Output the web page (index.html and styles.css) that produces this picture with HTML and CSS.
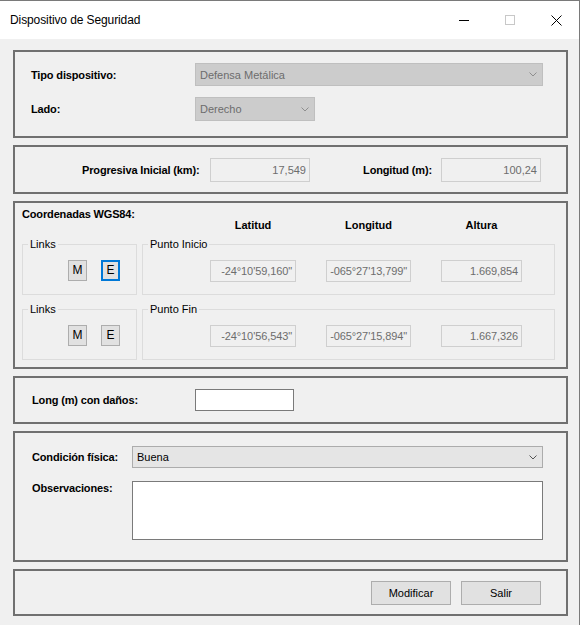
FILE: index.html
```html
<!DOCTYPE html>
<html lang="es">
<head>
<meta charset="utf-8">
<title>Dispositivo de Seguridad</title>
<link rel="stylesheet" href="styles.css">
</head>
<body>
<div class="window">
  <div class="titlebar">
    <span class="title">Dispositivo de Seguridad</span>
    <div class="controls">
      <span class="ctl"><svg width="10" height="10" viewBox="0 0 10 10"><path d="M0 5.5h10" stroke="#000" stroke-width="1"/></svg></span>
      <span class="ctl"><svg width="10" height="10" viewBox="0 0 10 10"><rect x="0.5" y="0.5" width="9" height="9" fill="none" stroke="#c8c8c8"/></svg></span>
      <span class="ctl"><svg width="11" height="11" viewBox="0 0 11 11"><path d="M0.5 0.5L10.5 10.5M10.5 0.5L0.5 10.5" stroke="#000" stroke-width="1"/></svg></span>
    </div>
  </div>

  <div class="content">
    <section class="panel p1">
      <div class="form-grid">
        <span class="lbl">Tipo dispositivo:</span>
        <div class="combo disabled wide"><span>Defensa Metálica</span><svg width="8" height="5" viewBox="0 0 8 5"><path d="M0.5 0.5L4 4L7.5 0.5" fill="none" stroke="#8e8e8e"/></svg></div>
        <span class="lbl">Lado:</span>
        <div class="combo disabled short"><span>Derecho</span><svg width="8" height="5" viewBox="0 0 8 5"><path d="M0.5 0.5L4 4L7.5 0.5" fill="none" stroke="#8e8e8e"/></svg></div>
      </div>
    </section>

    <section class="panel p2">
      <span class="lbl lbl-prog">Progresiva Inicial (km):</span>
      <div class="tb tb-wide">17,549</div>
      <span class="lbl lbl-long">Longitud (m):</span>
      <div class="tb tb-wide">100,24</div>
    </section>

    <section class="panel p3">
      <div class="coord-title">Coordenadas WGS84:</div>
      <div class="headers">
        <span>Latitud</span>
        <span>Longitud</span>
        <span>Altura</span>
      </div>
      <div class="grow first">
        <fieldset class="links">
          <legend>Links</legend>
          <div class="btns">
            <span class="mbtn">M</span>
            <span class="mbtn focus">E</span>
          </div>
        </fieldset>
        <fieldset class="punto">
          <legend>Punto Inicio</legend>
          <div class="coords">
            <div class="tb ctb">-24°10'59,160"</div>
            <div class="tb ctb">-065°27'13,799"</div>
            <div class="tb ctb">1.669,854</div>
          </div>
        </fieldset>
      </div>
      <div class="grow second">
        <fieldset class="links">
          <legend>Links</legend>
          <div class="btns">
            <span class="mbtn">M</span>
            <span class="mbtn">E</span>
          </div>
        </fieldset>
        <fieldset class="punto">
          <legend>Punto Fin</legend>
          <div class="coords">
            <div class="tb ctb">-24°10'56,543"</div>
            <div class="tb ctb">-065°27'15,894"</div>
            <div class="tb ctb">1.667,326</div>
          </div>
        </fieldset>
      </div>
    </section>

    <section class="panel p4">
      <span class="lbl lbl-danos">Long (m) con daños:</span>
      <div class="input"></div>
    </section>

    <section class="panel p5">
      <div class="form-grid2">
        <span class="lbl">Condición física:</span>
        <div class="combo enabled"><span>Buena</span><svg width="8" height="5" viewBox="0 0 8 5"><path d="M0.5 0.5L4 4L7.5 0.5" fill="none" stroke="#555"/></svg></div>
        <span class="lbl top">Observaciones:</span>
        <div class="textarea"></div>
      </div>
    </section>

    <section class="panel p6">
      <span class="btn">Modificar</span>
      <span class="btn">Salir</span>
    </section>
  </div>
</div>
</body>
</html>
```

FILE: styles.css
```css
html, body {
  margin: 0;
  padding: 0;
}
body {
  width: 580px;
  height: 625px;
  overflow: hidden;
  background: #f0f0f0;
  font-family: "Liberation Sans", Arial, sans-serif;
  font-size: 11px;
  color: #000;
}
.window {
  width: 580px;
  height: 625px;
  box-sizing: border-box;
  border-top: 1px solid #7a7a7a;
  border-right: 1px solid #7a7a7a;
  background: #f0f0f0;
}
.titlebar {
  height: 38px;
  background: #fff;
  display: flex;
  align-items: center;
  justify-content: space-between;
}
.title {
  font-size: 12px;
  padding-left: 10px;
  letter-spacing: -0.1px;
}
.controls {
  display: flex;
  height: 100%;
}
.ctl {
  width: 46px;
  display: flex;
  align-items: center;
  justify-content: center;
}
.content {
  display: flex;
  flex-direction: column;
  gap: 7px;
  padding: 11px 0 0 13px;
}
.panel {
  box-sizing: border-box;
  width: 555px;
  border: 2px solid #707070;
}
.lbl {
  font-weight: bold;
  letter-spacing: -0.15px;
  white-space: nowrap;
}

/* panel 1 */
.p1 {
  height: 88px;
  padding: 11px 0 0 16px;
}
.form-grid {
  display: grid;
  grid-template-columns: 164px auto;
  row-gap: 11px;
  align-items: center;
}
.combo {
  box-sizing: border-box;
  display: flex;
  align-items: center;
  justify-content: space-between;
  padding: 0 5px 0 4px;
  white-space: nowrap;
}
.combo.disabled {
  background: #cccccc;
  border: 1px solid #bfbfbf;
  color: #6d6d6d;
}
.combo.wide {
  width: 348px;
  height: 23px;
}
.combo.short {
  width: 120px;
  height: 24px;
}

/* panel 2 */
.p2 {
  height: 49px;
  display: flex;
  align-items: center;
  padding-left: 67px;
}
.lbl-prog {
  width: 115px;
  margin-right: 13px;
  text-align: right;
}
.lbl-long {
  width: 70px;
  margin-left: 52px;
  margin-right: 9px;
  text-align: right;
}
.tb {
  box-sizing: border-box;
  border: 1px solid #cfcfcf;
  background: #f0f0f0;
  color: #6d6d6d;
  text-align: right;
  padding-right: 3px;
  white-space: nowrap;
  overflow: hidden;
}
.tb-wide {
  width: 100px;
  height: 24px;
  line-height: 22px;
}

/* panel 3 */
.p3 {
  height: 168px;
  padding: 4px 7px 0 7px;
}
.coord-title {
  font-weight: bold;
  line-height: 14px;
  letter-spacing: -0.15px;
}
.headers {
  display: grid;
  grid-template-columns: 86px 85px 81px;
  column-gap: 30px;
  margin-left: 188px;
  margin-top: -3px;
  line-height: 14px;
  font-weight: bold;
  text-align: center;
}
.grow {
  display: flex;
  gap: 5px;
}
.grow.first {
  margin-top: 5px;
}
.grow.second {
  margin-top: 7px;
}
fieldset {
  box-sizing: border-box;
  margin: 0;
  padding: 9px 5px 12px;
  border: 1px solid #dcdcdc;
  min-width: 0;
}
legend {
  padding: 0 2px;
  line-height: 14px;
  font-size: 11px;
}
.links {
  width: 115px;
}
.punto {
  width: 413px;
}
.btns {
  display: flex;
  gap: 14px;
  margin-left: 40px;
}
.mbtn {
  box-sizing: border-box;
  width: 19px;
  height: 21px;
  border: 1px solid #adadad;
  background: #e1e1e1;
  font-size: 12px;
  line-height: 19px;
  text-align: center;
}
.mbtn.focus {
  border: 2px solid #0078d7;
  line-height: 17px;
}
.coords {
  display: grid;
  grid-template-columns: 86px 85px 81px;
  column-gap: 30px;
  margin-left: 62px;
}
.ctb {
  height: 22px;
  line-height: 20px;
  letter-spacing: -0.1px;
}

/* panel 4 */
.p4 {
  height: 48px;
  display: flex;
  align-items: center;
  padding-left: 17px;
}
.lbl-danos {
  width: 163px;
}
.input {
  box-sizing: border-box;
  width: 99px;
  height: 22px;
  border: 1px solid #7a7a7a;
  background: #fff;
}

/* panel 5 */
.p5 {
  height: 131px;
  padding: 13px 0 0 17px;
}
.form-grid2 {
  display: grid;
  grid-template-columns: 100px 411px;
  row-gap: 13px;
  align-items: center;
}
.combo.enabled {
  height: 22px;
  background: #e5e5e5;
  border: 1px solid #acacac;
  color: #000;
}
.lbl.top {
  align-self: start;
  line-height: 14px;
}
.textarea {
  box-sizing: border-box;
  height: 59px;
  border: 1px solid #7a7a7a;
  background: #fff;
}

/* panel 6 */
.p6 {
  height: 47px;
  display: flex;
  align-items: center;
  justify-content: flex-end;
  gap: 10px;
  padding-right: 25px;
}
.btn {
  box-sizing: border-box;
  width: 80px;
  height: 24px;
  border: 1px solid #adadad;
  background: #e1e1e1;
  line-height: 22px;
  text-align: center;
}
```
